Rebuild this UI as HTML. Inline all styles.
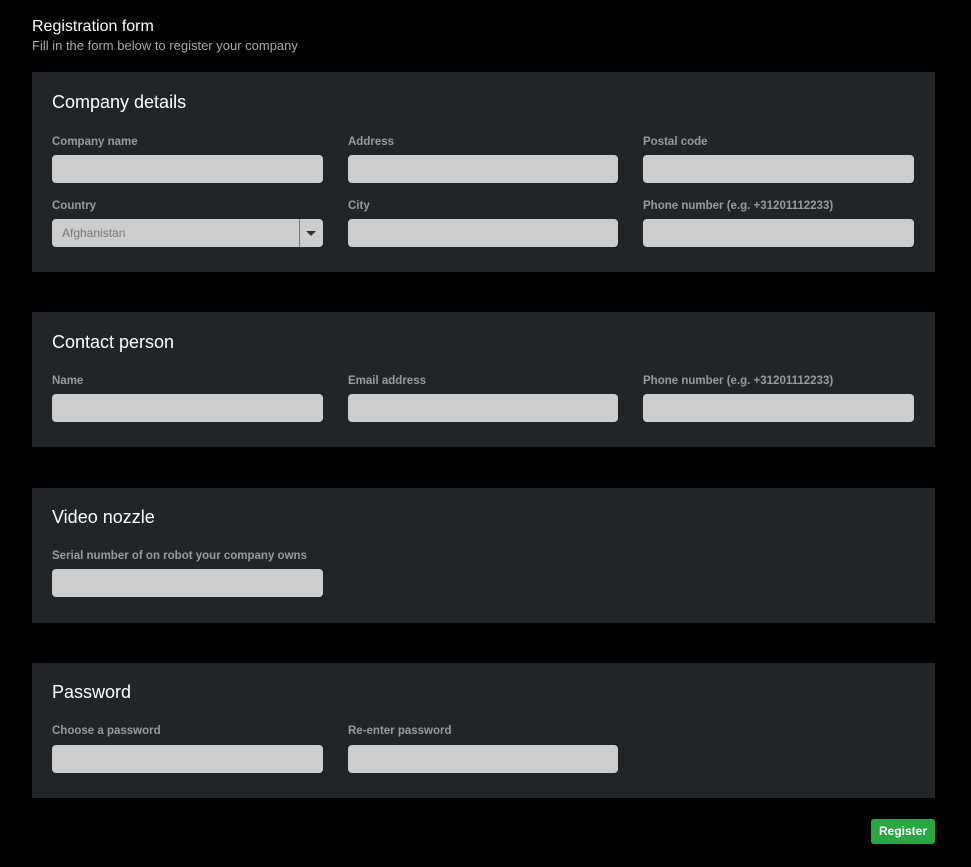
<!DOCTYPE html>
<html><head><style>
body{margin:0;background:#000;width:971px;height:867px;position:relative;font-family:"Liberation Sans",sans-serif;overflow:hidden}
.a{position:absolute}
.h1{left:32px;top:18px;font-size:16px;color:#fff}
.sub{left:32px;top:38px;font-size:13px;color:#a8a8a8}
.p{position:absolute;left:32px;width:903px;background:#222528}
.t{position:absolute;left:20px;font-size:18px;color:#fff}
.l{position:absolute;font-size:11.5px;font-weight:bold;color:#9a9a9a;margin-top:2px}
.i{position:absolute;height:28px;background:#cdcdcd;border-radius:4px}
.c1{left:20px;width:271px}.c2{left:316px;width:270px}.c3{left:611px;width:271px}
.btn{left:871px;top:819px;width:64px;height:25px;background:#28a745;border-radius:3px;color:#fff;font-size:12px;font-weight:bold;text-align:center;line-height:25px}
</style></head><body>
<div class="a h1">Registration form</div>
<div class="a sub">Fill in the form below to register your company</div>

<div class="p" style="top:72px;height:200px">
<div class="t" style="top:20px">Company details</div>
<div class="l c1" style="top:62px">Company name</div>
<div class="l c2" style="top:62px">Address</div>
<div class="l c3" style="top:62px">Postal code</div>
<div class="i c1" style="top:83px"></div>
<div class="i c2" style="top:83px"></div>
<div class="i c3" style="top:83px"></div>
<div class="l c1" style="top:126px">Country</div>
<div class="l c2" style="top:126px">City</div>
<div class="l c3" style="top:126px">Phone number (e.g. +31201112233)</div>
<div class="i c1" style="top:147px"><span style="position:absolute;left:10px;top:7px;font-size:12px;color:#777">Afghanistan</span><div style="position:absolute;right:0;top:0;width:23px;height:28px;border-left:1px solid #777"><div style="position:absolute;left:6px;top:12px;border-left:5px solid transparent;border-right:5px solid transparent;border-top:5px solid #333"></div></div></div>
<div class="i c2" style="top:147px"></div>
<div class="i c3" style="top:147px"></div>
</div>

<div class="p" style="top:312px;height:135px">
<div class="t" style="top:20px">Contact person</div>
<div class="l c1" style="top:61px">Name</div>
<div class="l c2" style="top:61px">Email address</div>
<div class="l c3" style="top:61px">Phone number (e.g. +31201112233)</div>
<div class="i c1" style="top:82px"></div>
<div class="i c2" style="top:82px"></div>
<div class="i c3" style="top:82px"></div>
</div>

<div class="p" style="top:488px;height:135px">
<div class="t" style="top:19px">Video nozzle</div>
<div class="l c1" style="top:60px">Serial number of on robot your company owns</div>
<div class="i c1" style="top:81px"></div>
</div>

<div class="p" style="top:663px;height:135px">
<div class="t" style="top:19px">Password</div>
<div class="l c1" style="top:60px">Choose a password</div>
<div class="l c2" style="top:60px">Re-enter password</div>
<div class="i c1" style="top:82px"></div>
<div class="i c2" style="top:82px"></div>
</div>

<div class="a btn">Register</div>
</body></html>
